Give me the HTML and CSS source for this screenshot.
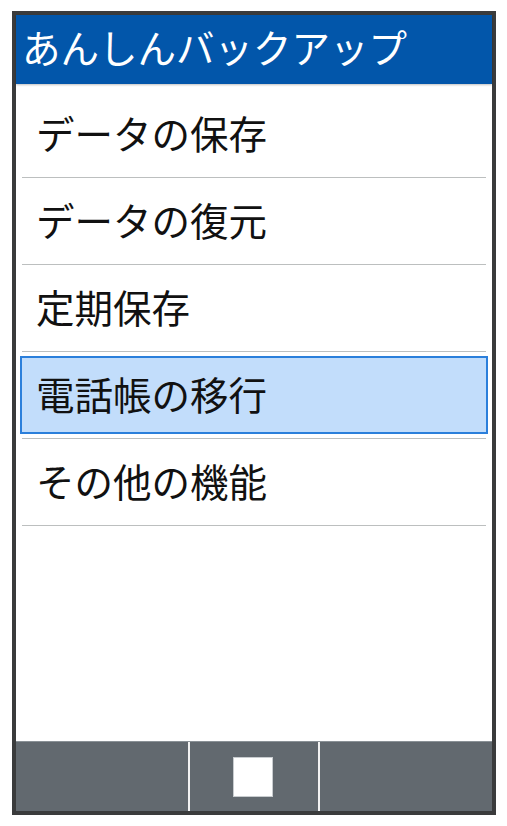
FILE: index.html
```html
<!DOCTYPE html>
<html lang="ja">
<head>
<meta charset="utf-8">
<link rel="stylesheet" href="styles.css">
</head>
<body>
<div class="phone">
  <header class="title-bar">あんしんバックアップ</header>
  <ul class="menu">
    <li class="menu-item"><span class="label">データの保存</span></li>
    <li class="menu-item"><span class="label">データの復元</span></li>
    <li class="menu-item"><span class="label">定期保存</span></li>
    <li class="menu-item selected"><span class="label">電話帳の移行</span></li>
    <li class="menu-item"><span class="label">その他の機能</span></li>
  </ul>
  <nav class="soft-keys">
    <div class="key key-left"></div>
    <div class="key key-center"><span class="square"></span></div>
    <div class="key key-right"></div>
  </nav>
</div>
</body>
</html>
```

FILE: styles.css
```css
html, body {
  margin: 0;
  padding: 0;
  background: #ffffff;
}
body {
  font-family: "Noto Sans CJK JP", "Noto Sans", sans-serif;
}
.phone {
  box-sizing: border-box;
  margin: 11px 0 0 12px;
  width: 484px;
  height: 804px;
  border: 4px solid #3a3b3c;
  display: flex;
  flex-direction: column;
  background: #ffffff;
}
.title-bar {
  height: 69px;
  background: #0256aa;
  color: #ffffff;
  font-size: 38.5px;
  font-weight: 400;
  line-height: 63px;
  padding-left: 6px;
  box-shadow: 0 1px 2px rgba(0,0,0,0.25);
  position: relative;
  z-index: 1;
}
.menu {
  list-style: none;
  margin: 0;
  padding: 7px 0 0 0;
  flex: 1;
}
.menu-item {
  box-sizing: border-box;
  height: 87px;
  margin: 0 6px;
  border-bottom: 1px solid #bcbfbf;
  display: flex;
  align-items: center;
  padding: 0 0 4px 14px;
  font-size: 38.5px;
  line-height: 1.3;
  color: #111111;
}
.menu-item.selected {
  padding: 0;
  align-items: stretch;
}
.menu-item.selected .label {
  flex: 1;
  margin: 4px -2px;
  border: 2px solid #2b7fdb;
  background: #c2ddfb;
  display: flex;
  align-items: center;
  padding: 0 0 3px 14px;
}
.soft-keys {
  height: 70px;
  display: flex;
  background: #62696f;
  border-top: 1px solid #8a9196;
  box-sizing: border-box;
}
.key {
  height: 100%;
}
.key-left {
  width: 172px;
  border-right: 2px solid #f2f2f2;
}
.key-center {
  width: 128px;
  border-right: 2px solid #f2f2f2;
  display: flex;
  align-items: center;
  justify-content: center;
}
.key-right {
  flex: 1;
}
.square {
  width: 38px;
  height: 38px;
  background: #ffffff;
  border: 1px solid #c8cccf;
  margin-right: 3px;
}
```
